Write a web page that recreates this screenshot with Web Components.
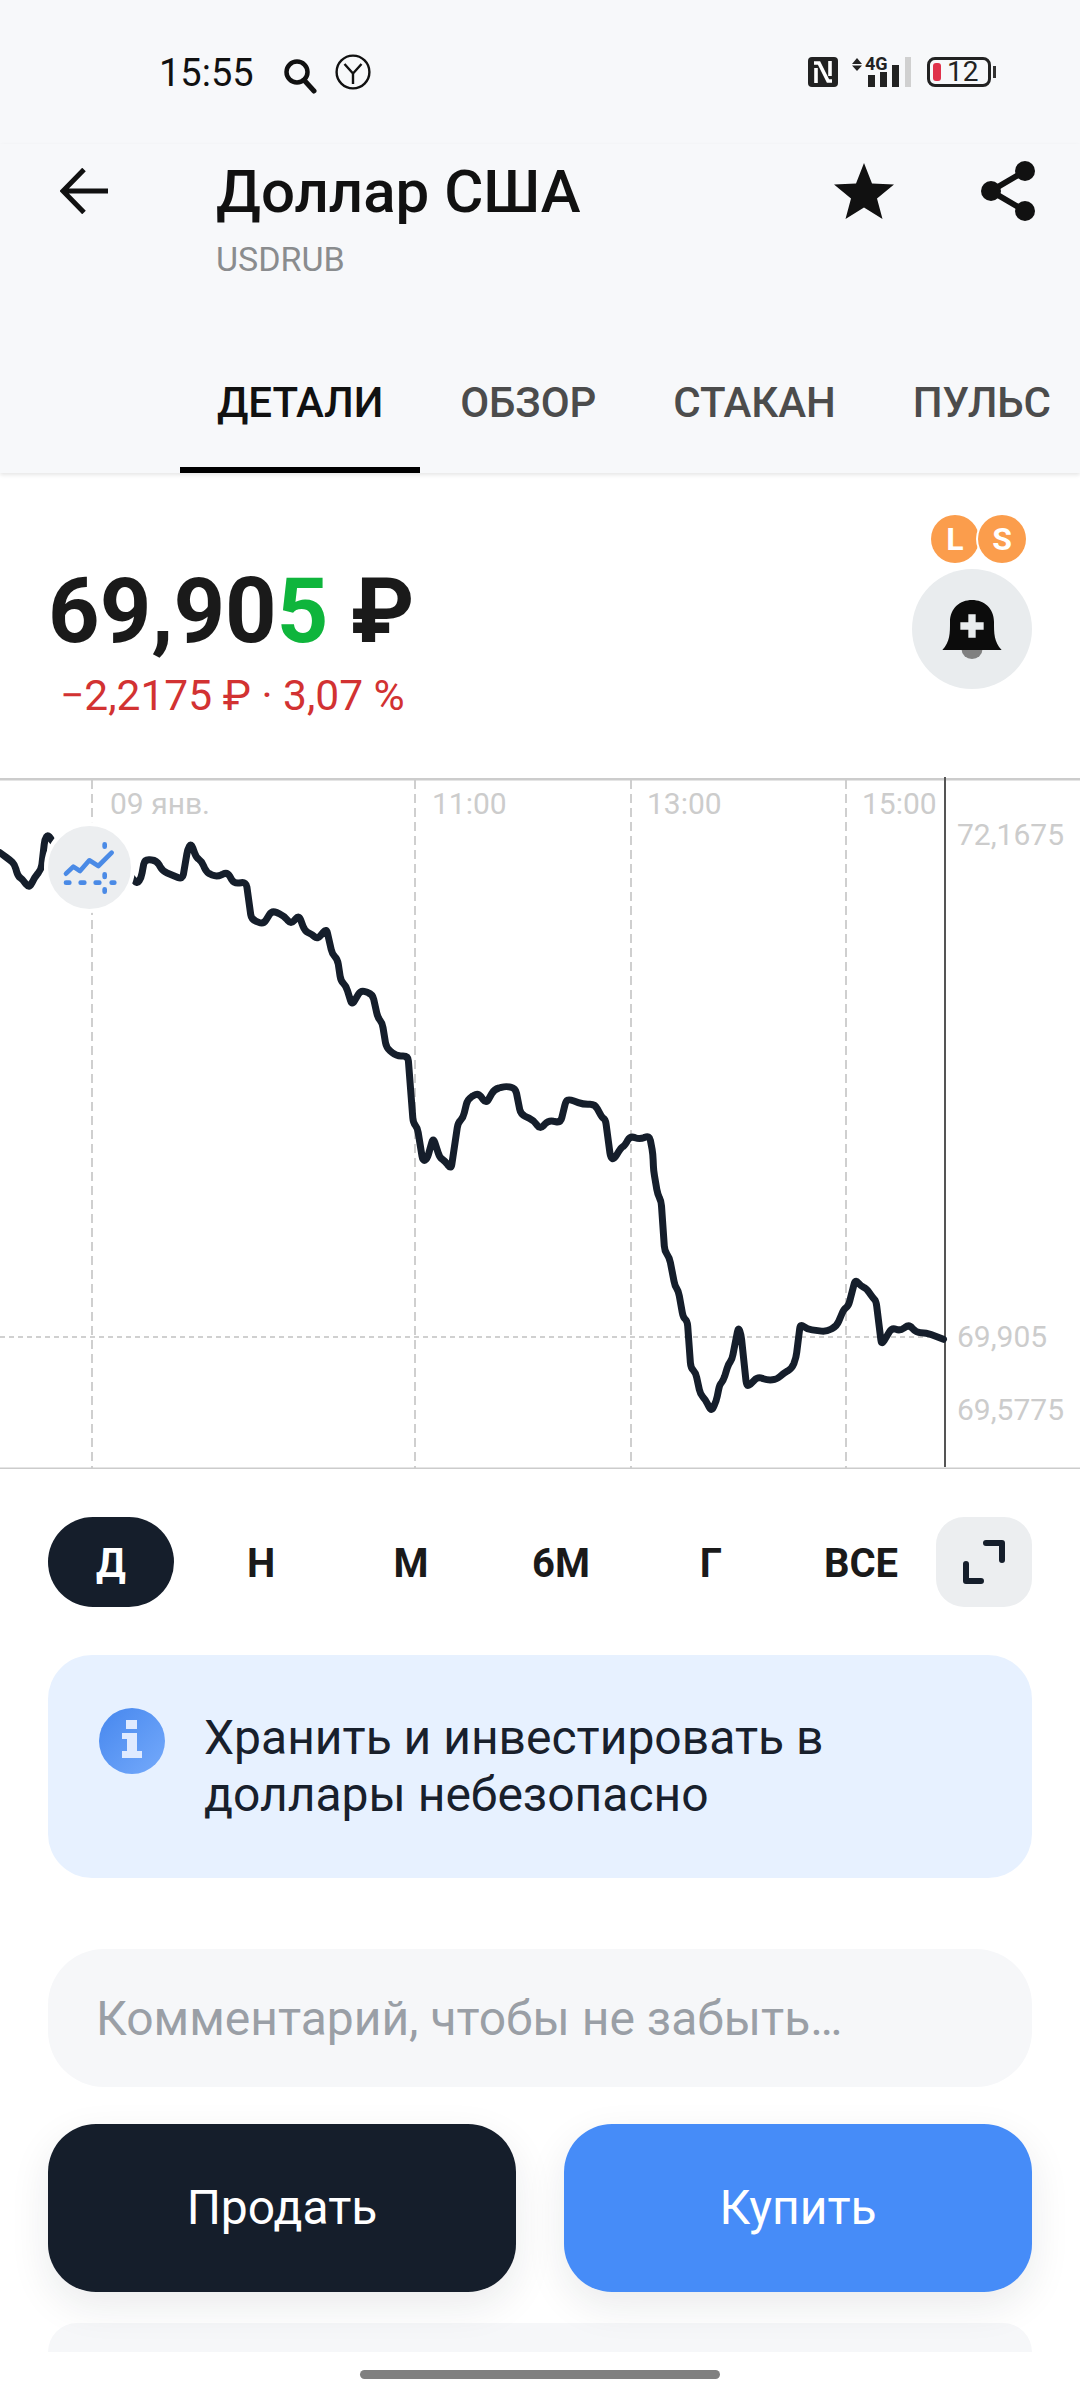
<!DOCTYPE html>
<html lang="ru">
<head>
<meta charset="utf-8">
<title>Доллар США</title>
<style>
	html, body { margin: 0; padding: 0; background: #fff; }
	body { width: 1080px; height: 2400px; overflow: hidden; font-family: Roboto, "Noto Sans", sans-serif; }
</style>
</head>
<body>
<status-bar></status-bar>
<app-header name="Доллар США" ticker="USDRUB">
	<tab-item active>ДЕТАЛИ</tab-item>
	<tab-item>ОБЗОР</tab-item>
	<tab-item>СТАКАН</tab-item>
	<tab-item>ПУЛЬС</tab-item>
</app-header>
<price-panel></price-panel>
<price-chart></price-chart>
<period-picker></period-picker>
<info-card>Хранить и инвестировать в<br>доллары небезопасно</info-card>
<comment-field>Комментарий, чтобы не забыть…</comment-field>
<trade-buttons></trade-buttons>
<peek-card></peek-card>
<home-bar></home-bar>

<script>
const FONT = 'Roboto, "Noto Sans", sans-serif';

class StatusBar extends HTMLElement {
	constructor() {
		super();
		this.attachShadow({ mode: 'open' }).innerHTML = `
		<style>
			:host { display: flex; align-items: flex-start; height: 144px; background: #f7f8fa; font-family: ${FONT}; color: #111; box-sizing: border-box; padding: 54px 0 0 159px; }
			.time { font-size: 38px; line-height: 36px; width: 124px; margin-top: 1px; }
			svg { display: block; flex: none; }
			.search { margin-top: 4px; }
			.yandex { margin-left: 18px; }
			.right { display: flex; align-items: flex-start; margin-left: auto; margin-right: 84px; margin-top: 3px; }
			.net { position: relative; width: 60px; height: 30px; margin-left: 13px; }
			.net span { position: absolute; left: 14px; top: -2px; font-size: 18px; line-height: 18px; font-weight: 700; color: #222; }
			.battery { display: flex; align-items: center; box-sizing: border-box; width: 64px; height: 30px; margin-left: 16px; padding-left: 3px; border: 3px solid #222; border-radius: 8px; font-size: 28px; line-height: 24px; color: #222; }
			.battery i { display: block; width: 8px; height: 18px; margin-right: 6px; border-radius: 3px; background: #e0314b; }
			.nub { width: 3px; height: 12px; margin: 9px 0 0 2px; background: #333; }
		</style>
		<span class="time">15:55</span>
		<svg class="search" width="34" height="36" viewBox="0 0 34 36"><circle cx="14" cy="14" r="10.5" fill="none" stroke="#111" stroke-width="4.5"/><path d="M21 22 L31 33" stroke="#111" stroke-width="5" stroke-linecap="round"/></svg>
		<svg class="yandex" width="36" height="36" viewBox="0 0 36 36" fill="none" stroke="#111" stroke-width="2.4"><circle cx="18" cy="18" r="16.4"/><path d="M9.5 10 L18 19.5 L26.5 10 M18 19.5 V30"/></svg>
		<div class="right">
			<svg width="30" height="30" viewBox="0 0 30 30">
				<rect width="30" height="30" rx="4" fill="#222"/>
				<path d="M8 11 V26 M6 6 H11 L20 24 H24 M22 19 V4" fill="none" stroke="#fff" stroke-width="3.6"/>
			</svg>
			<div class="net">
				<svg width="60" height="30" viewBox="0 0 60 30">
					<path d="M6 1 L11 7 H1 Z M6 14 L11 8.500 H1 Z" fill="#222"/>
					<rect x="17" y="18" width="7" height="12" fill="#222"/>
					<rect x="29" y="15" width="7" height="15" fill="#222"/>
					<rect x="41" y="8" width="7" height="22" fill="#222"/>
					<rect x="54" y="0" width="6" height="30" fill="#d0d0d0"/>
				</svg>
				<span>4G</span>
			</div>
			<div class="battery"><i></i>12</div>
			<div class="nub"></div>
		</div>`;
	}
}
customElements.define('status-bar', StatusBar);

const headerTemplate = document.createElement('template');
headerTemplate.innerHTML = `
	<style>
		:host { display: block; background: #f7f8fa; font-family: ${FONT}; height: 329px; box-shadow: 0 2px 4px rgba(0,0,0,.1); position: relative; z-index: 1; }
		.top { display: flex; align-items: flex-start; height: 234px; }
		.back { margin: 24px 0 0 60px; }
		.names { margin-left: 108px; flex: 1; }
		.name { font-size: 60px; line-height: 68px; font-weight: 500; color: #111; margin-top: 14px; }
		.ticker { font-size: 34px; line-height: 40px; color: #8a8c8e; margin-top: 13px; }
		.star { margin: 19px 0 0 0; }
		.share { margin: 17px 45px 0 87px; }
		svg { display: block; flex: none; }
		.tabs { display: flex; padding-left: 180px; gap: 3px; }
	</style>
	<div class="top">
		<svg class="back" width="48" height="46" viewBox="0 0 48 46" fill="none" stroke="#111" stroke-width="5"><path d="M24 1.500 L3 23 L24 44.500 M3 23 H48"/></svg>
		<div class="names"><div class="name"></div><div class="ticker"></div></div>
		<svg class="star" width="60" height="56" viewBox="0 0 60 56"><path d="M30 0 L38 20.500 L60 21.500 L43 35.500 L48.500 56 L30 44.500 L11.500 56 L17 35.500 L0 21.500 L22 20.500 Z" fill="#111"/></svg>
		<svg class="share" width="54" height="60" viewBox="0 0 54 60"><path d="M44 10 L10 30 L44 50" fill="none" stroke="#111" stroke-width="6"/><circle cx="44" cy="10" r="10" fill="#111"/><circle cx="10" cy="30" r="10" fill="#111"/><circle cx="44" cy="50" r="10" fill="#111"/></svg>
	</div>
	<div class="tabs"><slot></slot></div>
`;

class AppHeader extends HTMLElement {
	constructor() {
		super();
		this.attachShadow({ mode: 'open' }).appendChild(headerTemplate.content.cloneNode(true));
		this.shadowRoot.querySelector('.name').textContent = this.getAttribute('name');
		this.shadowRoot.querySelector('.ticker').textContent = this.getAttribute('ticker');
	}
}
customElements.define('app-header', AppHeader);

class TabItem extends HTMLElement {
	constructor() {
		super();
		this.attachShadow({ mode: 'open' }).innerHTML = `
		<style>
			:host { display: block; box-sizing: border-box; height: 95px; padding: 0 37px; font-size: 42px; line-height: 50px; font-weight: 500; color: #4c4c4c; white-space: nowrap; letter-spacing: -0.1px; }
			:host([active]) { color: #111; border-bottom: 6px solid #000; }
		</style>
		<slot></slot>`;
	}
}
customElements.define('tab-item', TabItem);

class PricePanel extends HTMLElement {
	constructor() {
		super();
		this.attachShadow({ mode: 'open' }).innerHTML = `
		<style>
			:host { display: flex; justify-content: space-between; height: 304px; box-sizing: border-box; font-family: ${FONT}; background: #fff; }
			.left { padding: 86px 0 0 48px; }
			.price { font-size: 90px; line-height: 106px; font-weight: 700; color: #1a1a1a; white-space: nowrap; }
			.price b { color: #0fb53c; font-weight: 700; }
			.change { font-size: 42.500px; line-height: 50px; color: #d23232; padding-left: 12px; margin-top: 6px; white-space: nowrap; }
			.right { width: 120px; margin: 42px 48px 0 0; }
			.badges { display: flex; justify-content: flex-end; height: 48px; margin: 0 6px 6px 0; }
			.badge { width: 48px; height: 48px; border-radius: 50%; background: #fb9d4c; color: #fff; font-size: 32px; line-height: 48px; font-weight: 700; text-align: center; box-sizing: border-box; }
			.badge + .badge { margin-left: -1px; box-shadow: -2px 0 0 #fff; }
			.bell { width: 120px; height: 120px; border-radius: 50%; background: #e9ecee; display: flex; align-items: center; justify-content: center; }
		</style>
		<div class="left">
			<div class="price">69,90<b>5</b> ₽</div>
			<div class="change">−2,2175 ₽ · 3,07 %</div>
		</div>
		<div class="right">
			<div class="badges"><span class="badge">L</span><span class="badge">S</span></div>
			<div class="bell">
				<svg width="60" height="59" viewBox="157 300 178 177">
					<ellipse cx="246" cy="450" rx="31" ry="27" fill="#808080"/>
					<path d="M157 450 C180 425 180 400 180 365 C180 325 210 300 246 300 C282 300 312 325 312 365 C312 400 312 425 335 450 Z" fill="#0c0c0c"/>
					<path d="M235 343 H257 V367 H281 V389 H257 V413 H235 V389 H211 V367 H235 Z" fill="#e9ecee"/>
				</svg>
			</div>
		</div>`;
	}
}
customElements.define('price-panel', PricePanel);

// точки сняты с рисунка по кускам, у каждого куска свой масштаб
const LINE_A = [[0,245],[30,268],[42,280],[52,315],[65,325],[85,352],[100,320],[120,295],[130,205],[140,190],[157,220],[260,290],[380,315],[398,340],[410,320],[420,265],[455,268],[472,300],[530,325],[545,235],[555,217],[570,260],[585,270],[600,305],[630,318],[660,303],[680,338],[715,333],[730,445],[765,460],[790,418],[825,435],[845,460],[868,432],[885,480],[905,490],[922,505],[948,472],[965,550],[980,565],[990,630],[1005,645],[1022,703],[1048,657],[1082,670],[1097,740],[1110,755],[1122,830],[1150,855],[1185,855],[1200,1055],[1212,1070],[1228,1170],[1240,1165],[1258,1100],[1277,1160],[1292,1170],[1310,1195],[1330,1055],[1345,1040],[1358,985],[1388,965],[1412,998],[1435,955],[1470,945],[1497,952],[1512,1030],[1550,1048],[1568,1075]];
const LINE_B = [[25,1048],[60,1055],[75,990],[85,985],[125,1000],[160,1000],[180,1040],[190,1045],[205,1160],[215,1165],[235,1130],[245,1125],[262,1095],[290,1105],[318,1093],[328,1150]];
const LINE_C = [[949,0],[955,70],[960,90],[965,240],[972,260],[980,345],[985,360],[992,440],[998,450],[1003,590],[1010,605],[1017,670],[1024,685],[1033,722],[1040,690],[1045,640],[1050,630],[1058,578],[1063,565],[1072,468],[1076,490],[1084,645],[1090,640],[1100,617],[1115,628],[1128,625],[1137,608],[1150,592],[1156,560],[1162,458],[1172,475],[1200,482],[1215,465],[1225,415],[1232,405],[1242,325],[1250,345],[1258,352],[1268,382],[1272,390],[1280,522],[1295,470],[1307,480],[1320,460],[1330,485],[1345,485],[1370,505]];

// ломаная со скруглёнными углами
function chartPath() {
	const top = 776;
	const a = LINE_A.map(p => [p[0] / 2.904, 770 + p[1] / 3 - top]);
	const b = LINE_B.map(p => [540 + p[0] / 2.904, 770 + p[1] / 3 - top]);
	const c = LINE_C.map(p => [p[0] / 1.452, 1170 + p[1] / 3 - top]);
	const pts = a.concat(b, c);
	let d = 'M' + pts[0][0].toFixed(1) + ' ' + pts[0][1].toFixed(1);
	for (let i = 1; i < pts.length - 1; i++) {
		const p = pts[i], prev = pts[i - 1], next = pts[i + 1];
		const l1 = Math.hypot(p[0] - prev[0], p[1] - prev[1]);
		const l2 = Math.hypot(next[0] - p[0], next[1] - p[1]);
		const t1 = Math.min(5, l1 / 2) / l1;
		const t2 = Math.min(5, l2 / 2) / l2;
		const x1 = p[0] + (prev[0] - p[0]) * t1, y1 = p[1] + (prev[1] - p[1]) * t1;
		const x2 = p[0] + (next[0] - p[0]) * t2, y2 = p[1] + (next[1] - p[1]) * t2;
		d += ` L${x1.toFixed(1)} ${y1.toFixed(1)} Q${p[0].toFixed(1)} ${p[1].toFixed(1)} ${x2.toFixed(1)} ${y2.toFixed(1)}`;
	}
	const last = pts[pts.length - 1];
	return d + ` L${last[0].toFixed(1)} ${last[1].toFixed(1)}`;
}

class PriceChart extends HTMLElement {
	constructor() {
		super();
		const vlines = [92, 415, 631, 846].map(x => `<line x1="${x}" x2="${x}" y1="3" y2="691" stroke="#cfcfcf" stroke-width="2" stroke-dasharray="9 5"/>`).join('');
		this.attachShadow({ mode: 'open' }).innerHTML = `
		<style>
			:host { display: block; position: relative; height: 692px; font-family: ${FONT}; background: #fff; }
			svg.plot { display: block; position: absolute; left: 0; top: 0; }
			span { position: absolute; font-size: 30px; line-height: 36px; color: #cccccc; white-space: nowrap; }
		</style>
		<svg class="plot" width="1080" height="692" viewBox="0 0 1080 692">
			${vlines}
			<line x1="0" x2="945" y1="560" y2="560" stroke="#d0d0d0" stroke-width="2" stroke-dasharray="5 4"/>
			<rect x="0" y="1" width="1080" height="2.500" fill="#cccccc"/>
			<rect x="0" y="690.500" width="1080" height="2.500" fill="#cccccc"/>
			<line x1="945" x2="945" y1="0" y2="690" stroke="#555" stroke-width="2"/>
			<path d="${chartPath()}" fill="none" stroke="#151e2b" stroke-width="7" stroke-linejoin="round" stroke-linecap="round"/>
			<circle cx="89.500" cy="90.500" r="43.500" fill="#eceef0" stroke="#fff" stroke-width="4"/>
			<svg x="30" y="34" width="130" height="110" viewBox="0 0 390 330" fill="none" stroke="#4a8ae6" stroke-width="14" stroke-linecap="round" stroke-linejoin="round">
				<polyline points="108,188 130,167 150,180 178,148 205,165 245,125"/>
				<path d="M108 215 H118 M152 215 H163 M197 215 H208 M245 215 H253 M224 100 V107 M224 190 V198 M224 235 V242"/>
			</svg>
		</svg>
		<span style="left:110px;top:9px">09 янв.</span>
		<span style="left:432px;top:9px">11:00</span>
		<span style="left:647px;top:9px">13:00</span>
		<span style="left:862px;top:9px">15:00</span>
		<span style="left:957px;top:40px">72,1675</span>
		<span style="left:957px;top:542px">69,905</span>
		<span style="left:957px;top:615px">69,5775</span>`;
	}
}
customElements.define('price-chart', PriceChart);

class PeriodPicker extends HTMLElement {
	constructor() {
		super();
		const items = ['Д', 'Н', 'М', '6М', 'Г', 'ВСЕ'].map((t, i) => `<div class="item${i === 0 ? ' on' : ''}">${t}</div>`).join('');
		this.attachShadow({ mode: 'open' }).innerHTML = `
		<style>
			:host { display: flex; height: 90px; margin-top: 48px; padding-left: 48px; font-family: ${FONT}; }
			.item { width: 126px; height: 90px; margin-right: 24px; border-radius: 45px; font-size: 40px; line-height: 94px; font-weight: 700; text-align: center; color: #1a1a1a; }
			.item.on { background: #151e2b; color: #fff; }
			.expand { width: 96px; height: 90px; margin-left: -12px; border-radius: 28px; background: #eceef0; display: flex; align-items: center; justify-content: center; flex: none; }
		</style>
		${items}
		<div class="expand">
			<svg width="48" height="48" viewBox="0 0 48 48" fill="none" stroke="#151e2b" stroke-width="6" stroke-linecap="round" stroke-linejoin="round"><path d="M26 5 H42 V22 M6 26 V43 H21"/></svg>
		</div>`;
	}
}
customElements.define('period-picker', PeriodPicker);

class InfoCard extends HTMLElement {
	constructor() {
		super();
		this.attachShadow({ mode: 'open' }).innerHTML = `
		<style>
			:host { display: flex; box-sizing: border-box; height: 223px; margin: 48px 48px 0; padding: 53px 0 0 51px; background: #e7f1ff; border-radius: 44px; font-family: ${FONT}; font-size: 48px; line-height: 57px; color: #18202c; }
			svg { display: block; flex: none; margin-right: 39px; }
			div { margin-top: 1px; white-space: nowrap; }
		</style>
		<svg width="66" height="66" viewBox="0 0 66 66">
			<defs><linearGradient id="g" x1="0" y1="0" x2="1" y2="1"><stop offset="0" stop-color="#4687ee"/><stop offset="1" stop-color="#75aafb"/></linearGradient></defs>
			<circle cx="33" cy="33" r="33" fill="url(#g)"/>
			<path d="M27 12 H38 V21 H27 Z M23 25 H38 V43 H43 V50 H23 V43 H28 V31 H23 Z" fill="#dfeaff"/>
		</svg>
		<div><slot></slot></div>`;
	}
}
customElements.define('info-card', InfoCard);

class CommentField extends HTMLElement {
	constructor() {
		super();
		this.attachShadow({ mode: 'open' }).innerHTML = `
		<style>
			:host { display: block; box-sizing: border-box; height: 138px; margin: 71px 48px 0; padding-left: 48px; background: #f6f7f9; border-radius: 56px; font-family: ${FONT}; font-size: 48px; line-height: 140px; color: #9a9fa6; white-space: nowrap; }
		</style>
		<slot></slot>`;
	}
}
customElements.define('comment-field', CommentField);

class TradeButtons extends HTMLElement {
	constructor() {
		super();
		this.attachShadow({ mode: 'open' }).innerHTML = `
		<style>
			:host { display: flex; gap: 48px; margin: 37px 48px 0; position: relative; z-index: 1; font-family: ${FONT}; }
			div { flex: 1; height: 168px; border-radius: 48px; font-size: 48px; line-height: 168px; text-align: center; color: #fff; box-shadow: 0 14px 40px rgba(20,30,43,.09); }
			.sell { background: #151e2b; }
			.buy { background: #468cf8; }
		</style>
		<div class="sell">Продать</div>
		<div class="buy">Купить</div>`;
	}
}
customElements.define('trade-buttons', TradeButtons);

class PeekCard extends HTMLElement {
	constructor() {
		super();
		this.attachShadow({ mode: 'open' }).innerHTML = `
		<style>
			:host { display: block; height: 29px; margin: 31px 48px 0; background: #f6f7f9; border-radius: 36px 36px 0 0; }
		</style>`;
	}
}
customElements.define('peek-card', PeekCard);

class HomeBar extends HTMLElement {
	constructor() {
		super();
		this.attachShadow({ mode: 'open' }).innerHTML = `
		<style>
			:host { display: block; width: 360px; height: 9px; margin: 18px auto 0; background: #808080; border-radius: 5px; }
		</style>`;
	}
}
customElements.define('home-bar', HomeBar);
</script>
</body>
</html>
